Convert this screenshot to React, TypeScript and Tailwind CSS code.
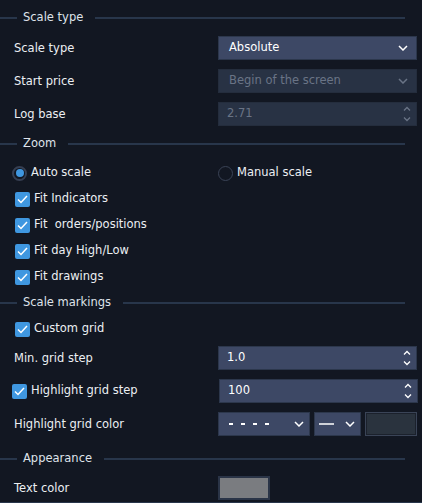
import React from "react";

const font = { fontFamily: '"DejaVu Sans", Verdana, sans-serif' };

function Chevron({ color = "#ffffff" }: { color?: string }) {
  return (
    <svg width="10" height="6" viewBox="0 0 10 6" className="shrink-0">
      <path d="M1 1 L5 5 L9 1" stroke={color} strokeWidth="1.5" fill="none" />
    </svg>
  );
}

function Spinner({ color = "#ffffff" }: { color?: string }) {
  return (
    <svg width="8" height="16" viewBox="0 0 8 16" className="shrink-0">
      <path d="M1 4.5 L4 1.5 L7 4.5" stroke={color} strokeWidth="1.3" fill="none" />
      <path d="M1 11.5 L4 14.5 L7 11.5" stroke={color} strokeWidth="1.3" fill="none" />
    </svg>
  );
}

function Check() {
  return (
    <span className="w-[15px] h-[15px] rounded-[2px] bg-[#3f97e0] flex items-center justify-center shrink-0">
      <svg width="11" height="9" viewBox="0 0 11 9">
        <path d="M1 4.5 L4 7.5 L10 1" stroke="#ffffff" strokeWidth="1.5" fill="none" />
      </svg>
    </span>
  );
}

function Section({ title, className = "" }: { title: string; className?: string }) {
  return (
    <div className={`flex items-center h-[12px] pr-[17px] ${className}`}>
      <div className="w-[17px] h-[2px] bg-[#28364b]" />
      <span className="pl-[6px] pr-[12px] text-[#dfe3ea]">{title}</span>
      <div className="flex-1 h-[2px] bg-[#28364b]" />
    </div>
  );
}

function Row({ label, children, className = "" }: { label: React.ReactNode; children: React.ReactNode; className?: string }) {
  return (
    <div className={`flex items-center h-[24px] ${className}`}>
      <div className="w-[218px] pl-[14px] pt-[2px] text-[#eceff3]">{label}</div>
      {children}
    </div>
  );
}

function CheckRow({ label, className = "" }: { label: string; className?: string }) {
  return (
    <div className={`flex items-center h-[26px] pl-[15px] gap-[4px] text-[#eceff3] ${className}`}>
      <Check />
      <span>{label}</span>
    </div>
  );
}

export default function App() {
  return (
    <div className="w-[422px] h-[503px] bg-[#121722] text-[11.5px] overflow-hidden flex flex-col" style={font}>
      <Section title="Scale type" className="mt-[12px]" />
      <Row label="Scale type" className="mt-[12px]">
        <div className="w-[199px] h-[24px] bg-[#3d4865] border border-[#2c374c] flex items-center justify-between pl-[10px] pr-[8px] text-[#ffffff]">
          <span>Absolute</span>
          <Chevron />
        </div>
      </Row>
      <Row label="Start price" className="mt-[9px]">
        <div className="w-[199px] h-[24px] bg-[#283244] border border-[#242d3d] flex items-center justify-between pl-[10px] pr-[8px] text-[#6a7486]">
          <span>Begin of the screen</span>
          <Chevron color="#6a7486" />
        </div>
      </Row>
      <Row label="Log base" className="mt-[9px]">
        <div className="w-[199px] h-[24px] bg-[#283244] border border-[#242d3d] flex items-center justify-between pl-[8px] pr-[5px] text-[#6a7486]">
          <span>2.71</span>
          <Spinner color="#6a7486" />
        </div>
      </Row>

      <Section title="Zoom" className="mt-[12px]" />
      <div className="flex items-center h-[20px] mt-[13px] text-[#eceff3]">
        <div className="w-[218px] pl-[12px] flex items-center gap-[4px]">
          <span className="w-[15px] h-[15px] rounded-full border-2 border-[#363f52] flex items-center justify-center">
            <span className="w-[8px] h-[8px] rounded-full bg-[#3f97e0]" />
          </span>
          <span>Auto scale</span>
        </div>
        <div className="flex items-center gap-[4px]">
          <span className="w-[15px] h-[15px] rounded-full border-[1.5px] border-[#3a4356]" />
          <span>Manual scale</span>
        </div>
      </div>
      <CheckRow label="Fit Indicators" className="mt-[3px]" />
      <CheckRow label={"Fit\u00a0 orders/positions"} />
      <CheckRow label="Fit day High/Low" />
      <CheckRow label="Fit drawings" />

      <Section title="Scale markings" className="mt-[7px]" />
      <CheckRow label="Custom grid" className="mt-[7px]" />
      <Row label="Min. grid step" className="mt-[4px]">
        <div className="w-[199px] h-[24px] bg-[#3d4865] border border-[#2c374c] flex items-center justify-between pl-[8px] pr-[5px] text-[#ffffff]">
          <span>1.0</span>
          <Spinner />
        </div>
      </Row>
      <div className="flex items-center h-[24px] mt-[9px] text-[#eceff3]">
        <div className="w-[219px] pl-[12px] flex items-center gap-[4px]">
          <Check />
          <span>Highlight grid step</span>
        </div>
        <div className="w-[199px] h-[24px] bg-[#3d4865] border border-[#2c374c] flex items-center justify-between pl-[8px] pr-[5px] text-[#ffffff]">
          <span>100</span>
          <Spinner />
        </div>
      </div>
      <Row label="Highlight grid color" className="mt-[9px]">
        <div className="flex items-center gap-[4px]">
          <div className="w-[92px] h-[24px] bg-[#3d4865] border border-[#2c374c] flex items-center justify-between pl-[10px] pr-[5px]">
            <svg width="42" height="4" viewBox="0 0 42 4">
              <path d="M0 2 H42" stroke="#ffffff" strokeWidth="2" strokeDasharray="4 8" />
            </svg>
            <Chevron />
          </div>
          <div className="w-[47px] h-[24px] bg-[#3d4865] border border-[#2c374c] flex items-center justify-between pl-[4px] pr-[5px]">
            <svg width="15" height="4" viewBox="0 0 15 4">
              <path d="M0 2 H15" stroke="#ffffff" strokeWidth="1.5" />
            </svg>
            <Chevron />
          </div>
          <div className="w-[52px] h-[24px] bg-[#2a333e] border border-[#3a4457] outline outline-1 outline-[#1b212c] -outline-offset-2" />
        </div>
      </Row>

      <Section title="Appearance" className="mt-[17px]" />
      <Row label="Text color" className="mt-[11px]">
        <div className="w-[52px] h-[24px] bg-[#7a7c80] border-2 border-[#2a3447]" />
      </Row>
      <div className="mt-[2px] h-[1px] bg-[#28364b]" />
    </div>
  );
}
